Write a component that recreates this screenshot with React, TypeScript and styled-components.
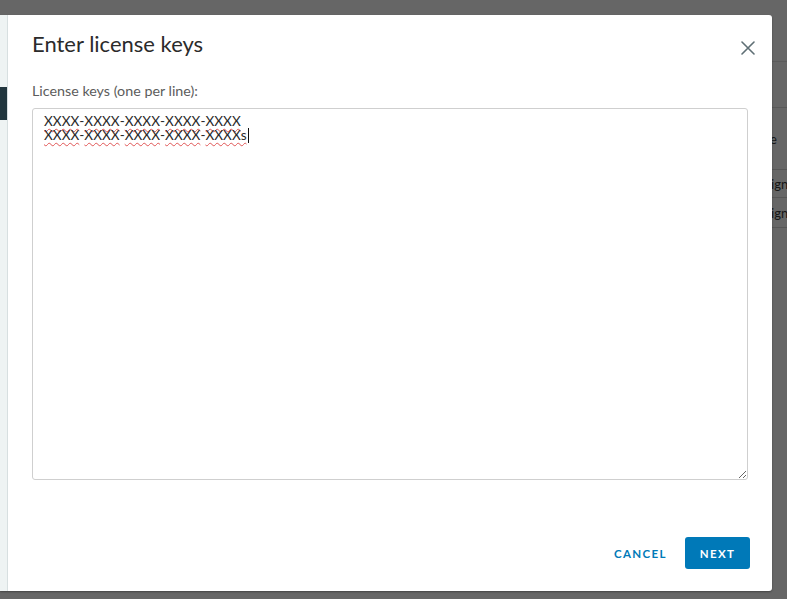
import React from "react";
import styled, { createGlobalStyle } from "styled-components";

const GlobalStyle = createGlobalStyle`
  html, body {
    margin: 0;
    padding: 0;
    background: #646464;
    overflow: hidden;
  }
  * { box-sizing: border-box; }
`;

const Stage = styled.div`
  position: relative;
  width: 787px;
  height: 599px;
  overflow: hidden;
  background: #ffffff;
  font-family: Lato, "Open Sans", sans-serif;
`;

/* page behind the dialog */
const BackPage = styled.div`
  display: flex;
  flex-direction: column;
  height: 100%;
  padding-left: 600px;
`;

const BackHeader = styled.div`
  height: 62px;
  border-bottom: 1px solid #e4e4e4;
`;

const BackToolbar = styled.div`
  height: 46px;
  border-bottom: 1px solid #dcdcdc;
`;

const BackRow = styled.div<{ $h: number; $indent: number }>`
  height: ${(p) => p.$h}px;
  display: flex;
  align-items: center;
  padding-left: ${(p) => p.$indent}px;
  border-bottom: 1px solid #d8d8d8;
  font-size: 13px;
  color: #3a3a3a;
  white-space: nowrap;
`;

const Scrim = styled.div`
  position: absolute;
  inset: 0;
  background: rgba(0, 0, 0, 0.6);
`;

const Modal = styled.div`
  position: absolute;
  left: 0;
  top: 15px;
  width: 772px;
  height: 576px;
  display: flex;
  background: #ffffff;
  box-shadow: 0 1px 2px rgba(0, 0, 0, 0.35);
  border-radius: 0 3px 3px 0;
`;

const StepNav = styled.nav`
  width: 8px;
  flex: none;
  background: #eef3f3;
  border-right: 1px solid #d7dfe0;
  padding-top: 72px;
`;

const ActiveStep = styled.div`
  height: 33px;
  width: 7px;
  background: #22363e;
`;

const Content = styled.div`
  flex: 1;
  display: flex;
  flex-direction: column;
  padding: 15px 22px 22px 24px;
`;

const Header = styled.div`
  display: flex;
  align-items: flex-start;
  justify-content: space-between;
  height: 28px;
`;

const Title = styled.h3`
  margin: 0;
  font-family: Lato, sans-serif;
  font-size: 22px;
  font-weight: 400;
  line-height: 28px;
  color: #2b2b2b;
`;

const CloseButton = styled.button`
  border: 0;
  background: transparent;
  padding: 0;
  margin: 10px -6px 0 0;
  width: 16px;
  height: 16px;
  display: flex;
  align-items: center;
  justify-content: center;
  cursor: pointer;
`;

const Body = styled.div`
  flex: 1;
  display: flex;
  flex-direction: column;
  padding-top: 23px;
  padding-right: 2px;
`;

const Label = styled.label`
  font-size: 14.3px;
  line-height: 20px;
  color: #5c5c5c;
  margin-bottom: 7px;
`;

const Editor = styled.div`
  height: 372px;
  border: 1px solid #cfcfcf;
  border-radius: 3px;
  padding: 5px 11px;
  overflow: auto;
  resize: both;
  font-family: Lato, sans-serif;
  font-size: 13.6px;
  line-height: 14px;
  color: #2a2a2a;
  white-space: pre;
`;

const KeyLine = styled.div`
  display: flex;
  align-items: center;
  height: 14px;
`;

const Word = styled.span`
  text-decoration: underline wavy #e05555;
  text-decoration-thickness: 1px;
  text-underline-offset: 2px;
  text-decoration-skip-ink: none;
`;

const Caret = styled.span`
  display: inline-block;
  width: 1px;
  height: 15px;
  background: #111;
  margin-left: 1px;
`;

const Footer = styled.div`
  display: flex;
  justify-content: flex-end;
  align-items: center;
  gap: 18px;
`;

const Button = styled.button<{ $primary?: boolean }>`
  height: 32px;
  padding: 0 ${(p) => (p.$primary ? "14px" : "0")};
  min-width: ${(p) => (p.$primary ? "65px" : "0")};
  border: 0;
  border-radius: 3px;
  background: ${(p) => (p.$primary ? "#0079b8" : "transparent")};
  color: ${(p) => (p.$primary ? "#ffffff" : "#0079b8")};
  font-family: Lato, sans-serif;
  font-size: 11.5px;
  font-weight: 700;
  letter-spacing: 1.4px;
  text-transform: uppercase;
  cursor: pointer;
`;

const keys = [
  ["XXXX", "XXXX", "XXXX", "XXXX", "XXXX"],
  ["XXXX", "XXXX", "XXXX", "XXXX", "XXXXs"],
];

export default function App() {
  return (
    <>
      <GlobalStyle />
      <Stage>
        <BackPage>
          <BackHeader />
          <BackToolbar />
          <BackRow $h={62} $indent={143}>Name</BackRow>
          <BackRow $h={28} $indent={151}>Assign</BackRow>
          <BackRow $h={30} $indent={151}>Assign</BackRow>
        </BackPage>
        <Scrim />
        <Modal role="dialog" aria-label="Enter license keys">
          <StepNav>
            <ActiveStep />
          </StepNav>
          <Content>
            <Header>
              <Title>Enter license keys</Title>
              <CloseButton aria-label="Close">
                <svg width="14" height="14" viewBox="0 0 14 14">
                  <path
                    d="M1 1 L13 13 M13 1 L1 13"
                    stroke="#5f6f75"
                    strokeWidth="1.6"
                    strokeLinecap="round"
                  />
                </svg>
              </CloseButton>
            </Header>
            <Body>
              <Label>License keys (one per line):</Label>
              <Editor role="textbox" aria-multiline="true">
                {keys.map((line, i) => (
                  <KeyLine key={i}>
                    {line.map((w, j) => (
                      <React.Fragment key={j}>
                        {j > 0 && "-"}
                        <Word>{w}</Word>
                      </React.Fragment>
                    ))}
                    {i === keys.length - 1 && <Caret />}
                  </KeyLine>
                ))}
              </Editor>
            </Body>
            <Footer>
              <Button>Cancel</Button>
              <Button $primary>Next</Button>
            </Footer>
          </Content>
        </Modal>
      </Stage>
    </>
  );
}
